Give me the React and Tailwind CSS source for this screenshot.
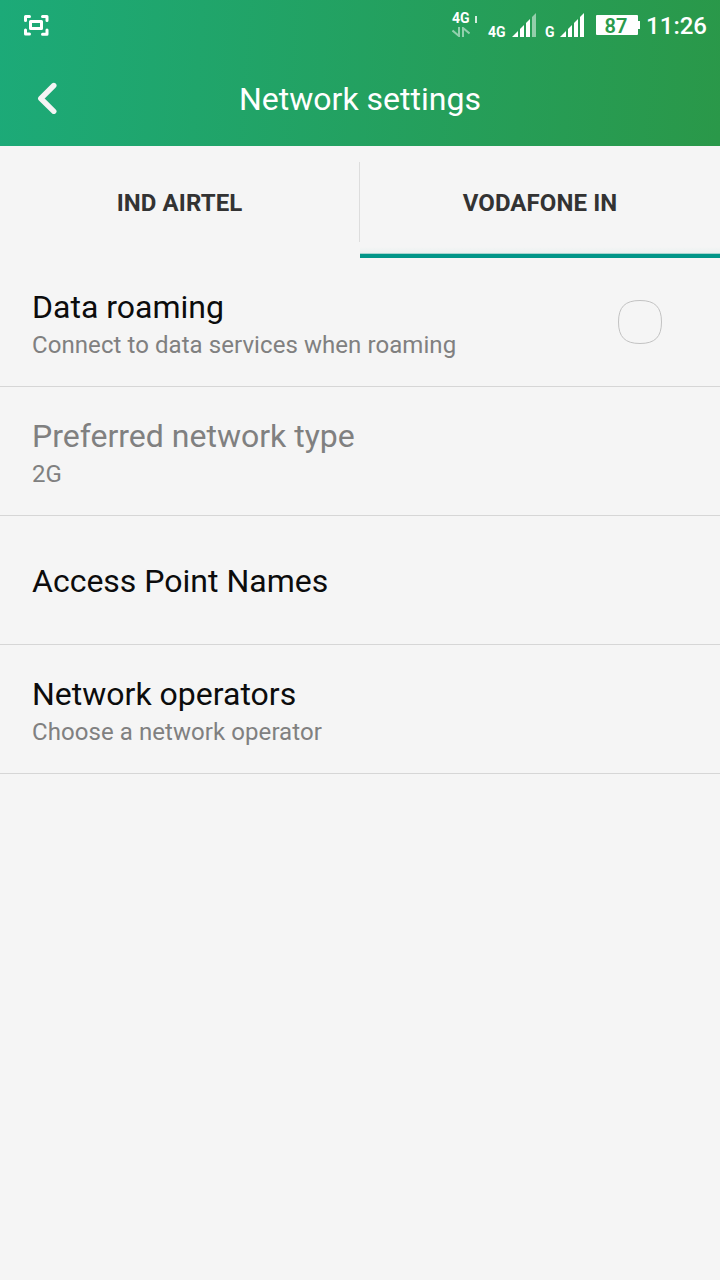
const preferences = [
    { title: "Data roaming", summary: "Connect to data services when roaming", checkbox: true },
    { title: "Preferred network type", summary: "2G", disabled: true },
    { title: "Access Point Names" },
    { title: "Network operators", summary: "Choose a network operator" },
];

const ScreenshotIcon = () => (
    <svg width="26" height="22" viewBox="0 0 26 22" fill="none" stroke="white" strokeWidth="3" strokeLinecap="round" strokeLinejoin="round">
        <path d="M1.5 5.5V1.5H5.5M18.5 1.5h4.5V5.5M1.5 15v4H5.5M18.5 19.2h4.5V15" />
        <rect x="6.5" y="6.5" width="11" height="7" />
    </svg>
);

// up / down arrows shown under the data type
const TrafficIcon = () => (
    <svg width="18" height="10" viewBox="0 0 18 10" fill="none" stroke="white" strokeOpacity="0.5" strokeWidth="2">
        <path d="M0.5 3.5L7 9V0M11 10V1L17.5 6.5" />
    </svg>
);

const SignalIcon = ({ weak }) => (
    <svg width="24" height="24" viewBox="0 0 24 24" fill="white">
        <path d="M0 24L6 18V24Z" />
        <path d="M8 24V16L12 12V24Z" />
        <path d="M14 24V10L18 6V24Z" />
        <path d="M20 24V4L24 0V24Z" fillOpacity={weak ? 0.5 : 1} />
    </svg>
);

const StatusBar = () => (
    <div className="flex h-[50px] pl-6 pr-[13px] text-white">
        <div className="pt-[15px]">
            <ScreenshotIcon />
        </div>
        <div className="ml-auto flex">
            <div className="w-[18px] pt-[13px]">
                <div className="h-[14px] text-[14px] leading-[10px] font-bold">4G</div>
                <TrafficIcon />
            </div>
            <div className="mt-4 ml-[5px] h-[7px] w-[2px] bg-white/80" />
            <div className="mt-[27px] ml-[11px] w-6 text-[14px] leading-[10px] font-bold">4G</div>
            <div className="pt-[13px]">
                <SignalIcon weak />
            </div>
            <div className="mt-[27px] ml-[9px] w-[15px] text-[14px] leading-[10px] font-bold">G</div>
            <div className="pt-[13px]">
                <SignalIcon />
            </div>
            <div className="mt-[15px] ml-3 flex h-5 items-center">
                <div className="h-5 w-[42px] rounded-[1px] bg-white pr-[2px] text-center text-[20px] leading-[22px] font-semibold text-[#2a9a4c]">87</div>
                <div className="h-2 w-[2px] bg-white" />
            </div>
            <div className="ml-[5px] w-[62px] pt-[10px] text-right text-[24px] leading-8 font-medium">11:26</div>
        </div>
    </div>
);

const Header = () => (
    <header className="h-[146px] bg-[linear-gradient(94deg,#1caa78,#2a9849)]">
        <StatusBar />
        <div className="grid h-24 grid-cols-[96px_1fr_96px] items-center">
            <button className="pl-[37px]" aria-label="Back">
                <svg width="22" height="32" viewBox="0 0 22 32" fill="none" stroke="#f4f4f4" strokeWidth="5.4" strokeLinecap="round" strokeLinejoin="round">
                    <path d="M16.8 3.5L3.8 16.5L16.8 29.3" />
                </svg>
            </button>
            <h1 className="pt-[2px] text-center text-[32px] leading-10 text-white">Network settings</h1>
        </div>
    </header>
);

const Tabs = () => (
    <div className="flex h-28 text-center text-[24px] leading-8 font-bold tracking-[0.1px] text-[#333]">
        <div className="flex flex-1 pt-4">
            <div className="h-20 flex-1 border-r border-[#ddd] pt-[25px]">IND AIRTEL</div>
        </div>
        <div className="flex flex-1 flex-col">
            <div className="flex-1 pt-[41px]">VODAFONE IN</div>
            <div className="h-[6px] bg-gradient-to-b from-[#f5f5f5] to-[#e9f1f0]" />
            <div className="h-px bg-[#a8d5d0]" />
            <div className="h-[4px] bg-[#009688]" />
        </div>
    </div>
);

const Preference = ({ title, summary, checkbox, disabled }) => (
    <div className="flex h-[129px] items-center border-b border-[#d6d6d6] px-8">
        <div className={summary ? "flex-1 pt-2" : "flex-1 pt-[2px]"}>
            <div className={`text-[32px] leading-[38px] ${disabled ? "text-[#808080]" : "text-[#0c0c0c]"}`}>{title}</div>
            {summary && <div className="text-[24px] leading-[38px] tracking-[0.07px] text-[#808080]">{summary}</div>}
        </div>
        {checkbox && (
            <svg className="mr-[26px]" width="44" height="44" viewBox="0 0 44 44" fill="none" stroke="#c2c2c2">
                <path d="M22 0.5C37 0.5 43.5 7 43.5 22S37 43.5 22 43.5S0.5 37 0.5 22S7 0.5 22 0.5Z" />
            </svg>
        )}
    </div>
);

const App = () => {
    return (
        <div className="min-h-screen w-[720px] bg-[#f5f5f5] font-['Roboto',sans-serif]">
            <Header />
            <Tabs />
            {preferences.map((pref) => (
                <Preference key={pref.title} {...pref} />
            ))}
        </div>
    );
};

export default App;
